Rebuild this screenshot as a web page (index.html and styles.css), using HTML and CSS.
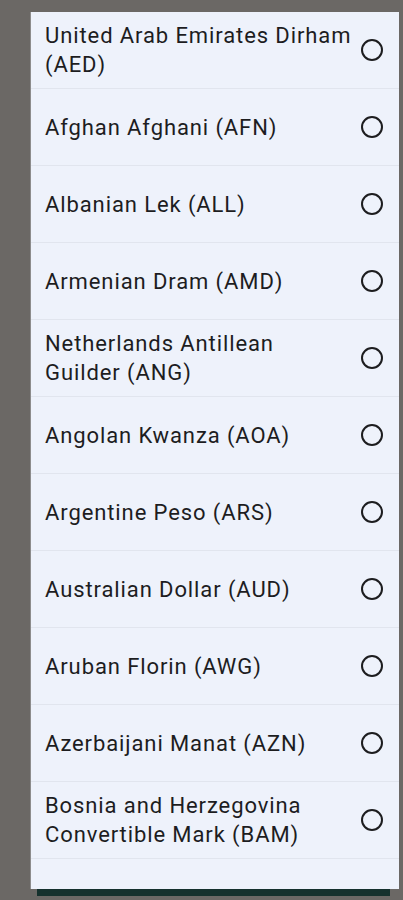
FILE: index.html
```html
<!DOCTYPE html>
<html>
<head>
<meta charset="utf-8">
<link rel="stylesheet" href="styles.css">
</head>
<body>
<div class="screen">
  <div class="dialog">
    <ul class="list">
      <li class="row"><span class="label">United Arab Emirates Dirham (AED)</span><svg class="radio" viewBox="0 0 24 24"><circle cx="12" cy="12" r="10"/></svg></li>
      <li class="row"><span class="label">Afghan Afghani (AFN)</span><svg class="radio" viewBox="0 0 24 24"><circle cx="12" cy="12" r="10"/></svg></li>
      <li class="row"><span class="label">Albanian Lek (ALL)</span><svg class="radio" viewBox="0 0 24 24"><circle cx="12" cy="12" r="10"/></svg></li>
      <li class="row"><span class="label">Armenian Dram (AMD)</span><svg class="radio" viewBox="0 0 24 24"><circle cx="12" cy="12" r="10"/></svg></li>
      <li class="row"><span class="label">Netherlands Antillean Guilder (ANG)</span><svg class="radio" viewBox="0 0 24 24"><circle cx="12" cy="12" r="10"/></svg></li>
      <li class="row"><span class="label">Angolan Kwanza (AOA)</span><svg class="radio" viewBox="0 0 24 24"><circle cx="12" cy="12" r="10"/></svg></li>
      <li class="row"><span class="label">Argentine Peso (ARS)</span><svg class="radio" viewBox="0 0 24 24"><circle cx="12" cy="12" r="10"/></svg></li>
      <li class="row"><span class="label">Australian Dollar (AUD)</span><svg class="radio" viewBox="0 0 24 24"><circle cx="12" cy="12" r="10"/></svg></li>
      <li class="row"><span class="label">Aruban Florin (AWG)</span><svg class="radio" viewBox="0 0 24 24"><circle cx="12" cy="12" r="10"/></svg></li>
      <li class="row"><span class="label">Azerbaijani Manat (AZN)</span><svg class="radio" viewBox="0 0 24 24"><circle cx="12" cy="12" r="10"/></svg></li>
      <li class="row"><span class="label">Bosnia and Herzegovina Convertible Mark (BAM)</span><svg class="radio" viewBox="0 0 24 24"><circle cx="12" cy="12" r="10"/></svg></li>
    </ul>
  </div>
  <div class="sheet-edge"></div>
</div>
</body>
</html>
```
FILE: styles.css
```css
html, body {
  margin: 0;
  padding: 0;
  background: #6b6865;
  height: 900px;
  overflow: hidden;
}

.screen {
  padding: 12px 4px 0 31px;
  display: flex;
  flex-direction: column;
}

.dialog {
  height: 877px;
  background: #eef2fb;
  overflow: hidden;
  box-shadow: -1px 0 0 #8d8c8c;
}

.list {
  list-style: none;
  margin: 0;
  padding: 0;
}

.row {
  height: 76px;
  border-bottom: 1px solid #e1e5ee;
  display: flex;
  align-items: center;
  padding: 0 15px 0 14px;
  gap: 6px;
}

.label {
  flex: 1;
  font-family: Roboto, "Noto Sans", sans-serif;
  font-size: 22px;
  letter-spacing: 0.9px;
  line-height: 29px;
  color: #1d1d1f;
}

.radio {
  width: 24px;
  height: 24px;
  flex: none;
}

.radio circle {
  fill: none;
  stroke: #1d1d1f;
  stroke-width: 2;
}

.sheet-edge {
  height: 7px;
  margin: 0 9px 0 6px;
  background: #15312d;
}
```
